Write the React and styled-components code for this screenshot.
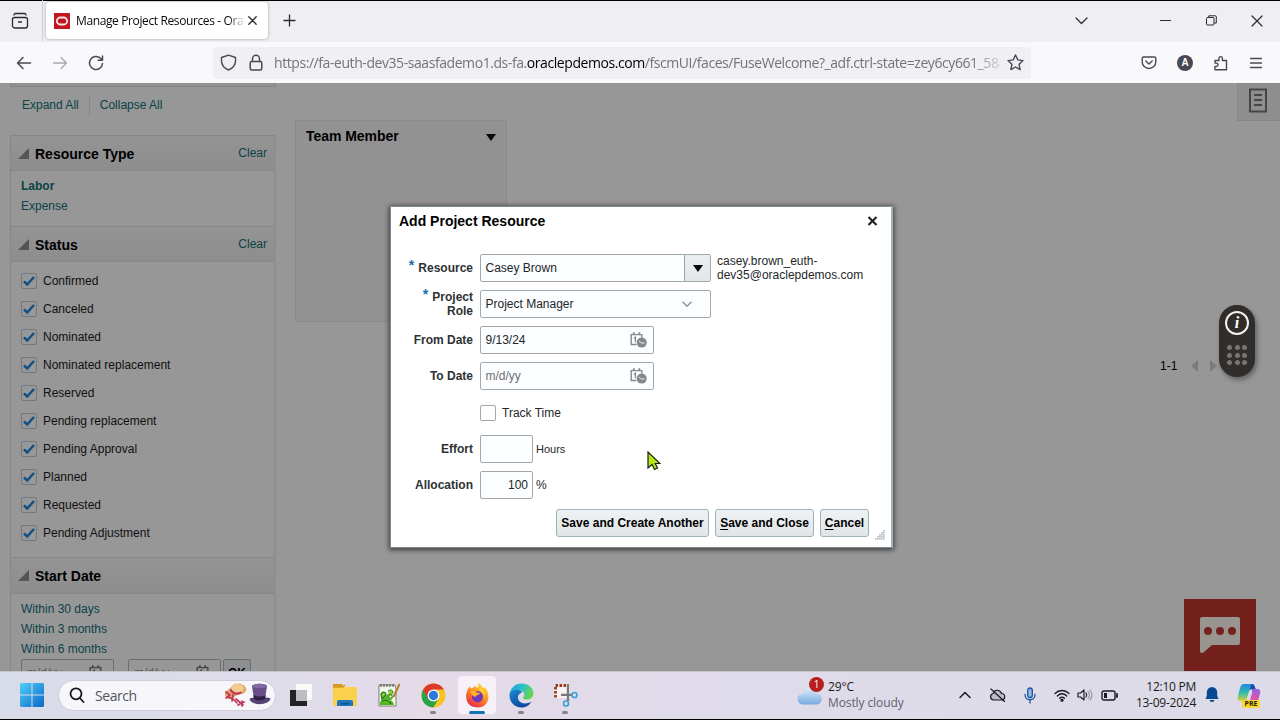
import React from "react";
import styled, { createGlobalStyle } from "styled-components";

const GlobalStyle = createGlobalStyle`
  * { box-sizing: border-box; }
  body { margin: 0; background: #000; font-family: "Liberation Sans", Arial, sans-serif; font-size: 12px; color: #000; }
  svg { display: block; flex: none; }
`;

const ui = `"Open Sans", "Noto Sans", sans-serif`;

const Screen = styled.div`
  width: 1280px; height: 720px; padding: 1px 0; overflow: hidden;
  display: flex; flex-direction: column; background: #000;
`;

/* Browser chrome */
const TabStrip = styled.div`
  height: 41px; flex: none; display: flex; align-items: center; background: #efeef3;
  color: #2b2a33; padding: 0 17px 2px 0;
`;
const TabManager = styled.div`
  width: 43px; height: 41px; padding-left: 11px; display: flex; align-items: center;
  border-right: 1px solid #cfced6;
`;
const Tab = styled.div`
  width: 222px; height: 37px; margin-left: 3px; padding: 0 10px 0 8px; border-radius: 4px;
  background: #fff; box-shadow: 0 0 3px rgba(0,0,0,.35);
  display: flex; align-items: center;
`;
const TabTitle = styled.span`
  width: 169px; margin-left: 6px; overflow: hidden; white-space: nowrap;
  font: 12px/20px ${ui}; letter-spacing: -0.38px; color: #08080c;
  mask-image: linear-gradient(90deg, #000 90%, transparent 100%);
`;
const PlusSlot = styled.div` margin-left: 15px; flex: 1; `;
const WindowButtons = styled.div` display: flex; align-items: center; `;
const WinSlot = styled.div` margin-left: ${p => p.$gap}px; `;

const NavBar = styled.div`
  height: 41px; flex: none; display: flex; align-items: center; background: #f9f9fb; color: #4a4953;
`;
const NavButtons = styled.div`
  width: 213px; display: flex; gap: 20px; padding-left: 16px;
`;
const UrlBar = styled.div`
  width: 818px; height: 32px; border-radius: 4px; background: #f0eff4; display: flex; align-items: center;
  padding: 0 7px;
`;
const UrlText = styled.div`
  width: 726px; margin: 1px 7px 0 11px; overflow: hidden; white-space: nowrap;
  font: 14px/22px ${ui}; letter-spacing: ${p => p.$track || 0}px; color: #74737b;
  mask-image: linear-gradient(90deg, #000 96%, transparent 101%);
  b { font-weight: 400; color: #000; }
`;
const NavActions = styled.div`
  flex: 1; display: flex; justify-content: flex-end; align-items: center; gap: 18px; padding-right: 17px;
`;
const Avatar = styled.span`
  width: 16px; height: 16px; margin: 0 2px; border-radius: 50%; background: #4a4953; color: #fff;
  display: flex; align-items: center; justify-content: center; font: bold 10px/16px "Liberation Sans", sans-serif;
`;

/* Page */
const Page = styled.main`
  position: relative; height: 588px; flex: none; overflow: hidden; background: #979797; display: flex;
`;
const Sidebar = styled.aside`
  width: 266px; margin-left: 10px; flex: none;
`;
const SidebarTop = styled.div`
  height: 4px; border: 1px solid #868686; border-top: 0; background: #919191;
`;
const TreeActions = styled.div`
  height: 48px; display: flex; align-items: center; padding: 0 0 12px 12px;
`;
const Link = styled.a`
  color: #0b4247; font-size: 12px; line-height: 20px; font-weight: ${p => (p.$bold ? 700 : 400)}; display: block;
`;
const Rule = styled.i` width: 1px; height: 21px; margin: 0 10px; background: #868686; `;
const Facets = styled.div` border: 1px solid #868686; border-right-width: 2px; border-right-color: #8e8e8e; height: 560px; `;
const FacetHead = styled.div`
  height: ${p => p.$h}px; padding: 0 7px; display: flex; align-items: center;
  background: linear-gradient(#949494, #8d8d8d); border-bottom: 1px solid #868686;
  border-top: ${p => (p.$first ? 0 : "1px solid #868686")};
  h2 { flex: 1; margin: 1px 0 0 6px; font-size: 14px; line-height: 18px; }
`;
const LinkList = styled.div`
  padding: ${p => p.$pad}px 10px 0 10px; height: ${p => p.$h || "auto"};
`;
const CheckList = styled.div` height: 295px; padding: 5px 10px 0; `;
const CheckRow = styled.div` height: 28px; display: flex; align-items: center; gap: 6px; color: #101010; `;
const Box = styled.span`
  width: 16px; height: 16px; border: 1px solid ${p => p.$line || "#747a7c"}; border-radius: 2px;
  display: flex; align-items: center; justify-content: center;
`;
const RangeRow = styled.div` display: flex; padding-left: 10px; `;
const DimInput = styled.div`
  width: ${p => p.$w}px; height: 28px; margin-right: ${p => p.$gap}px; padding: 0 7px 0 5px;
  display: flex; align-items: center; justify-content: space-between;
  border: 1px solid #686f71; border-radius: 2px; color: #555;
`;
const DimButton = styled.div`
  width: 28px; height: 28px; border: 1px solid #686f71; border-radius: 2px; background: #8e8f90;
  font-weight: 700; line-height: 26px; text-align: center;
`;

const Content = styled.section` flex: 1; display: flex; align-items: flex-start; padding-left: 19px; `;
const MemberCard = styled.div`
  width: 212px; height: 202px; margin-top: 37px; padding: 6px 10px; border: 1px solid #8b8b8b; border-radius: 2px;
  background: #929292; display: flex; justify-content: space-between; align-items: flex-start;
  h2 { margin: 0; font-size: 14px; line-height: 18px; letter-spacing: -0.05px; }
  svg { margin-top: 7px; }
`;
const Pager = styled.div`
  margin: 275px 0 0 653px; display: flex; align-items: center; line-height: 16px;
  span { width: 31px; }
  svg + svg { margin-left: 12px; }
`;
const DocTab = styled.div`
  width: 43px; height: 38px; margin-left: auto; padding: 5px 0 0 11px; background: #8e8e8e;
  border-left: 1px solid #898989; border-bottom: 1px solid #858585;
`;

/* Floating layers over the page */
const Pill = styled.div`
  position: absolute; left: 1219px; top: 222px; width: 36px; height: 72px; border-radius: 18px;
  background: #302d2a; box-shadow: 2px 3px 5px rgba(0,0,0,.35); display: flex; flex-direction: column; align-items: center;
  padding-top: 6px; gap: 10px;
`;
const InfoDot = styled.div`
  width: 24px; height: 24px; border: 2px solid #f4f2f0; border-radius: 50%; color: #fff;
  font: italic bold 16px/19px "Liberation Serif", serif; text-align: center;
`;
const DotGrid = styled.div`
  display: grid; grid-template-columns: repeat(3, 5px); gap: 2.5px;
  i { width: 5px; height: 5px; border-radius: 50%; background: #777573; }
`;
const ChatButton = styled.div`
  position: absolute; left: 1184px; top: 516px; width: 72px; height: 72px; background: #74211e;
  display: flex; align-items: center; justify-content: center;
`;
const Dialog = styled.div`
  position: absolute; left: 390px; top: 123px; width: 503px; height: 342px;
  background: #fff; border: 1px solid #7e8b92; border-right: 2px solid #a3b1bb; box-shadow: 0 1px 5px 1px rgba(0,0,0,.6);
  display: flex; flex-direction: column;
`;
const DialogHead = styled.header`
  height: 43px; padding: 5px 13px 0 8px; display: flex; justify-content: space-between; align-items: flex-start;
  h1 { margin: 0; font-size: 14px; line-height: 18px; }
  svg { margin-top: 4px; }
`;
const FormRow = styled.div`
  height: 36.15px; display: flex; align-items: center;
`;
const Label = styled.label`
  width: 82px; margin-right: 7px; text-align: right; font-weight: 700; line-height: 14px; color: #2e3234;
`;
const Star = styled.sup` color: #1a6fa8; font-size: 14px; line-height: 0; vertical-align: 2px; margin-right: 4px; `;
const Field = styled.div`
  width: ${p => p.$w}px; height: 28px; border: 1px solid #a0aaae; border-radius: 2px; background: #fcfdfe;
  display: flex; align-items: center; justify-content: ${p => (p.$right ? "flex-end" : "space-between")};
  padding: 0 ${p => (p.$pad ?? 4)}px 0 4.5px; color: ${p => (p.$hint ? "#6c7073" : "#22262a")};
`;
const DropButton = styled.span`
  width: 26px; height: 26px; background: linear-gradient(#eceff1, #e2e6e9); border-left: 1px solid #9aa4a8;
  display: flex; align-items: center; justify-content: center;
`;
const Note = styled.span`
  margin-left: ${p => p.$gap}px; line-height: 14px; font-size: ${p => p.$size || 12}px; color: #24282b;
`;
const Footer = styled.footer` display: flex; gap: 6px; padding: 6px 0 0 165px; `;
const Button = styled.button`
  width: ${p => p.$w}px; height: 28px; padding: 0; border: 1px solid #9fb0b8; border-radius: 3px;
  background: linear-gradient(#eef2f4, #e0e5e8); font: bold 12px "Liberation Sans", Arial, sans-serif; color: #000; white-space: nowrap;
  u { text-underline-offset: 2px; }
`;
const Grip = styled.div` position: absolute; right: 6px; bottom: 7px; `;
const Cursor = styled.div` position: absolute; left: 647px; top: 368px; `;

/* Taskbar */
const Taskbar = styled.div`
  height: 48px; flex: none; display: flex; align-items: center; padding: 0 0 1px 20px;
  background: linear-gradient(90deg, #d8dce8 0, #dfdcea 22%, #e5dae8 34%, #dfdbea 55%, #dddbe7 100%);
  border-top: 1px solid #c4c4cf; font-family: ${ui}; color: #1b1b20;
`;
const SearchPill = styled.div`
  width: 218px; height: 31px; margin: 0 3px 0 14px; border-radius: 16px; background: #f7f7fb; border: 1px solid #d0ced9;
  display: flex; align-items: center; padding: 0 3px 0 10px; color: #555560;
  font-size: 14px; letter-spacing: -0.45px;
  span { flex: 1; margin-left: 10px; }
`;
const Slot = styled.div`
  width: 38px; height: 38px; margin: 0 3px; border-radius: 4px; position: relative;
  display: flex; align-items: center; justify-content: center;
  background: ${p => (p.$active ? "#f6f1f8" : "transparent")};
  &::after {
    content: ""; position: absolute; bottom: 0; height: 3px; border-radius: 2px;
    width: ${p => (p.$active ? 16 : p.$open ? 6 : 0)}px; background: ${p => (p.$active ? "#1473b5" : "#85838c")};
  }
`;
const Weather = styled.div`
  margin-left: 209px; width: 130px; display: flex; gap: 4px; align-items: center; position: relative;
  font-size: 12px; line-height: 16px; white-space: nowrap; letter-spacing: ${p => p.$track}px;
  p { margin: 0; } p + p { color: #62616b; }
`;
const Badge = styled.span`
  position: absolute; left: 13px; top: -2px; width: 15px; height: 15px; border-radius: 50%; background: #b81e1e; color: #fff;
  font-size: 10px; line-height: 15px; text-align: center;
`;
const Tray = styled.div`
  flex: 1; display: flex; align-items: center; justify-content: flex-end; padding-right: 19px;
`;
const TraySlot = styled.div` margin-right: ${p => p.$gap}px; `;
const Clock = styled.div`
  width: 70px; margin-right: 9px; text-align: right; font-size: 12px; line-height: 16px; letter-spacing: -0.25px; white-space: nowrap;
`;
const Copilot = styled.div` position: relative; margin-left: 18px; `;
const PreTag = styled.span`
  position: absolute; left: 5px; bottom: -1px; width: 18px; height: 8px; border-radius: 2px; background: #fcd62e;
  color: #231d08; font-size: 7px; font-weight: 700; line-height: 8px; text-align: center;
`;

const Stroke = ({ w = 16, h = w, vb, sw = 1.3, children, ...rest }) => (
  <svg width={w} height={h} viewBox={vb || `0 0 ${w} ${h}`} fill="none" stroke="currentColor" strokeWidth={sw}
    strokeLinecap="round" strokeLinejoin="round" {...rest}>{children}</svg>
);
const TabClose = styled(Stroke)` margin-left: 3px; `;
const Lock = styled(Stroke)` margin-left: 12px; `;
const Faded = styled(Stroke)` opacity: .45; `;
const MenuLines = styled(Stroke)` margin-left: 2px; `;

const CalendarIcon = ({ color = "#85888a" }) => (
  <svg width="17" height="16" viewBox="0 0 17 16">
    <path d="M1.200 2.300v10.200h5.300M11.800 2.500v3M.5 2.600h12" fill="none" stroke={color} strokeWidth="1.4" />
    <path d="M3.800 .3v2.500M9.300 .3v2.500" fill="none" stroke={color} strokeWidth="1.800" />
    <path d="M3.800 6.200 5.400 5.200v5" fill="none" stroke={color} strokeWidth="1.300" />
    <circle cx="11.700" cy="10.600" r="5" fill={color} />
    <path d="M9 9.200l2.600 1.900 2.900-.2" fill="none" stroke="#f2f2f2" strokeWidth="1" />
  </svg>
);
const Disclosure = () => (
  <svg width="11" height="11"><path d="M11 0v11H0z" fill="#555" /></svg>
);
const Caret = () => (
  <svg width="10" height="7"><path d="M0 0h10L5 7z" fill="#080808" /></svg>
);

const WindowsIcon = () => (
  <svg width="24" height="24" viewBox="0 0 24 24">
    <defs><linearGradient id="win" x1="0" y1="0" x2="1" y2="1"><stop stopColor="#4fd0f8" /><stop offset="1" stopColor="#0b67c8" /></linearGradient></defs>
    <path d="M1 0h10.5v11.5H0V1zM12.5 0H23l1 1v10.5H12.5zM0 12.5h11.5V24H1l-1-1zM12.5 12.5H24V23l-1 1H12.5z" fill="url(#win)" />
  </svg>
);
const HatsIcon = () => (
  <svg width="48" height="24" viewBox="0 0 48 24">
    <path d="M1 12C0 7 6 7 8 3c3-4 12-3 14 2 1 4-2 6-6 6-4 1-5 3-8 5-4 1-6-1-7-4z" fill="#e3a965" />
    <path d="M7 7C8 0 17-1 20 5c-1 4-6 6-9 5z" fill="#f3cd8f" />
    <path d="M6.500 6.500c2 4 6 5 11 3" fill="none" stroke="#c1365c" strokeWidth="2.200" />
    <path d="M2 9l4 3-4 3M4 14l5 2 4 4M9 12l-1 6M12 16l7 6M18 18v5M14 22l6-3" fill="none" stroke="#c1365c" strokeWidth="1.700" strokeLinecap="round" />
    <path d="M25.500 15.500c4-2 17-2 21 0-1 7-20 8-21 0z" fill="#564277" />
    <path d="M28 3c3-3 13-3 15 0l-2 13c-2 3-8 3-11 0z" fill="#684f8b" />
    <ellipse cx="35.500" cy="3" rx="7.500" ry="2.200" fill="#8169a3" />
    <path d="M29.500 12c3 2 9 2 12 0l-.5 4c-3 2-8 2-11 0z" fill="#2c2144" />
  </svg>
);
const TaskViewIcon = () => (
  <svg width="24" height="24" viewBox="0 0 24 24">
    <path d="M1 7h6v11h11v5H1z" fill="#232326" /><path d="M7 1h16v16H7z" fill="#fafafa" /><path d="M7 7h11v11H7z" fill="#bdbcc0" />
  </svg>
);
const FolderIcon = () => (
  <svg width="26" height="24" viewBox="0 0 26 24">
    <path d="M1 1h9l2 3h12v4H1z" fill="#d99a1c" /><rect x="1" y="4" width="24" height="19" rx="1.5" fill="#fbd04d" />
    <path d="M1 4h10l2-2" fill="none" stroke="#d99a1c" strokeWidth="1.500" />
    <path d="M5 23v-4q0-2 2-2h12q2 0 2 2v4z" fill="#1c76bd" /><path d="M9 20h8v1.5H9z" fill="#0c4f87" />
  </svg>
);
const NotepadIcon = () => (
  <svg width="24" height="24" viewBox="0 0 24 24">
    <path d="M2 2h16l1 4v17H2z" fill="#f5f8ee" stroke="#60645a" strokeWidth=".8" />
    <path d="M4 1v3M7 1v3M10 1v3M13 1v3M16 1v3" stroke="#444" strokeWidth="1" />
    <path d="M3 22c-1-5 4-6 7-10 3-3 6-1 6 2s-3 3-4 3c3 0 5 3 5 5z" fill="#52b41f" />
    <path d="M4 11c2-3 5-2 5 1l-4 4zM5 18c3-1 6-1 9 3" fill="#87d13d" stroke="#1c6f12" strokeWidth="1.200" />
    <path d="M11 8c2-2 5-1 5 1s-2 3-4 3" fill="#87d13d" stroke="#1c6f12" strokeWidth=".8" />
    <circle cx="13.500" cy="13.500" r="1.400" fill="#fff" stroke="#276b18" strokeWidth=".6" />
    <path d="M22.500 1 16.500 14" stroke="#b97d2c" strokeWidth="2" />
  </svg>
);
const ChromeIcon = () => (
  <svg width="25" height="25" viewBox="0 0 24 24">
    <circle cx="12" cy="12" r="11.5" fill="#f7c325" />
    <path d="M2 6.3a11.5 11.5 0 0 1 20 0H12L7 14.8z" fill="#dc3a2d" />
    <path d="M2 6.3A11.5 11.5 0 0 0 11.8 23.5L17 14.8 12 12H5.400z" fill="#2ba24c" />
    <path d="M2 6.3 7 14.9 12 6.3 10 3z" fill="#dc3a2d" />
    <circle cx="12" cy="12" r="5.7" fill="#fff" /><circle cx="12" cy="12" r="4.5" fill="#2b78df" />
  </svg>
);
const FirefoxIcon = () => (
  <svg width="25" height="25" viewBox="0 0 24 24">
    <defs><linearGradient id="fx" x1=".8" y1="0" x2=".2" y2="1"><stop stopColor="#ffe53d" /><stop offset=".45" stopColor="#ff8f1f" /><stop offset="1" stopColor="#e7204f" /></linearGradient></defs>
    <path d="M3 5.5 4.6 3l1 2.200L8 4.400C10 1.500 11 4.500 12 4.800c1-1.400 1-3.300.8-4.800 3 1.500 3.700 3.800 5 5.300l.7-1.700C25 9.600 24 23.500 12 23.500S-.5 11.500 3 5.500z" fill="url(#fx)" />
    <circle cx="12" cy="13.300" r="5.300" fill="#6f37b9" />
    <path d="M5.300 8c2.400-1.200 4.700-.1 6 1.400 1.600 0 3 .4 3 1-1 1.200-3.600 1-3.900 3-1.800 0-4.400-1.600-5.100-5.400z" fill="#ffb32d" />
    <path d="M14 7c3 1.300 4.700 4 3.700 7.800C20 10 17.800 6 14 4.400z" fill="#ffda38" />
  </svg>
);
const EdgeIcon = () => (
  <svg width="25" height="25" viewBox="0 0 24 24">
    <defs>
      <linearGradient id="edA" x1="0" y1="0" x2="1" y2=".4"><stop stopColor="#2499dc" /><stop offset=".5" stopColor="#29bfd0" /><stop offset="1" stopColor="#65d452" /></linearGradient>
      <linearGradient id="edB" x1="0" y1="0" x2=".5" y2="1"><stop stopColor="#1b87d5" /><stop offset="1" stopColor="#0d4a9e" /></linearGradient>
    </defs>
    <path d="M.6 11C1 5 6 .5 12 .5c7 0 11.500 4.700 11.500 9.400 0 4-3 6-6 6-3.800 0-4.800-1.300-3.300-3 1.200-1.800.6-5.300-4.200-5.400C6.800 7.500 2 7.500.6 11z" fill="url(#edA)" />
    <path d="M.5 12C.6 8 4 6.300 8 6.500c2.500.2 4 1.500 4.500 2.500-3 1-4.500 3.500-3.700 6.300C10 19.500 15.500 21 21.500 18 19 22 15.500 23.500 12 23.500 5.500 23.500.5 18.500.5 12z" fill="url(#edB)" />
  </svg>
);
const SnipIcon = () => (
  <svg width="26" height="26" viewBox="0 0 26 26">
    <path d="M2 2h16v14H2z" fill="#f5f2f1" />
    <path d="M3.500 15.500V3.500h11" fill="none" stroke="#9c3a20" strokeWidth="2.800" strokeDasharray="2.600 1.400" />
    <path d="M16 2v17M9 12.800h11" stroke="#77777c" strokeWidth="2.300" />
    <circle cx="14" cy="21.500" r="2.500" fill="none" stroke="#3fa3d9" strokeWidth="1.700" />
    <circle cx="22.500" cy="13" r="2.500" fill="none" stroke="#3fa3d9" strokeWidth="1.700" />
  </svg>
);
const CloudIcon = () => (
  <svg width="28" height="22" viewBox="0 0 28 22">
    <defs><linearGradient id="cl" x1="0" y1="0" x2="0" y2="1"><stop stopColor="#dcebfb" /><stop offset="1" stopColor="#78a9e0" /></linearGradient></defs>
    <path d="M7 20.500a5.500 5.500 0 0 1 0-11C8 3 18 2 20 9c8 0 7 11.500 1 11.500z" fill="url(#cl)" />
  </svg>
);
const CopilotIcon = () => (
  <svg width="24" height="24" viewBox="0 0 24 24">
    <defs>
      <linearGradient id="cpA" x1="0" y1="0" x2="0" y2="1"><stop stopColor="#2388df" /><stop offset=".5" stopColor="#2eb9b0" /><stop offset="1" stopColor="#d9d33a" /></linearGradient>
      <linearGradient id="cpB" x1="0" y1="0" x2="0" y2="1"><stop stopColor="#8f65e8" /><stop offset=".6" stopColor="#dd54a9" /><stop offset="1" stopColor="#ef7d52" /></linearGradient>
    </defs>
    <path d="M7 1h8q2 0 2.600 2l1 3h-4q-2 0-2.700 2.500L10 15q-1 3-4 3H3q-3 0-2.300-4L3 5q1-4 4-4z" fill="url(#cpA)" />
    <path d="M14.500 1q2.500 0 3 2l1 3h-4l-2 1z" fill="#1b4bb0" />
    <path d="M14.500 6H20q4 0 3.200 4L21 18q-1 4-4 4H9q3-1 3.800-4l2-7q.7-2.500-.3-5z" fill="url(#cpB)" />
  </svg>
);

const statuses = ["Confirmed", "Canceled", "Nominated", "Nominated replacement", "Reserved", "Pending replacement",
  "Pending Approval", "Planned", "Requested", "Pending Adjustment"];

function BrowserChrome() {
  return (
    <>
      <TabStrip>
        <TabManager>
          <Stroke w={18} sw={1.3}><rect x="1.500" y="5.500" width="15" height="10.500" rx="2" /><path d="M3 3q0-1.500 1.500-1.500h9q1.500 0 1.500 1.500M7.500 10h3" /></Stroke>
        </TabManager>
        <Tab>
          <svg width="16" height="16"><rect width="16" height="16" fill="#c01722" /><rect x="2.800" y="4.500" width="10.400" height="7" rx="3.500" fill="none" stroke="#ffe5e5" strokeWidth="1.800" /></svg>
          <TabTitle>Manage Project Resources - Oracle</TabTitle>
          <TabClose w={9} sw={1.3}><path d="M.8.8l7.400 7.400M8.200.8.8 8.200" /></TabClose>
        </Tab>
        <PlusSlot><Stroke w={13} sw={1.300}><path d="M6.500 1v11M1 6.500h11" /></Stroke></PlusSlot>
        <WindowButtons>
          <Stroke w={13} h={8} sw={1.200}><path d="M1 1l5.500 5.500L12 1" /></Stroke>
          <WinSlot $gap={72}><Stroke w={11} h={3} sw={1}><path d="M.5 1.500h10" /></Stroke></WinSlot>
          <WinSlot $gap={35}><Stroke w={11} sw={1}><rect x=".5" y="2.500" width="7.500" height="7.500" rx="1" /><path d="M2.800 2V.8h6.500q1 0 1 1V8H8.500" /></Stroke></WinSlot>
          <WinSlot $gap={34}><Stroke w={12} sw={1.200}><path d="M1 1l10 10M11 1 1 11" /></Stroke></WinSlot>
        </WindowButtons>
      </TabStrip>
      <NavBar>
        <NavButtons>
          <Stroke w={16} sw={1.500}><path d="M14.500 8H1.500M7 2.500 1.500 8 7 13.500" /></Stroke>
          <Faded w={16} sw={1.300}><path d="M1.500 8h13M9 2.500 14.500 8 9 13.500" /></Faded>
          <Stroke w={16} sw={1.500}><path d="M14.500 8.500A6.500 6.500 0 1 1 12.500 3.300L14 4.800M14.500 1v4.300h-4.300" /></Stroke>
        </NavButtons>
        <UrlBar>
          <Stroke w={17} sw={1.400}><path d="M8.500 1.200 15.500 3.500v3.200c0 4.300-2.500 7.300-7 9.300-4.500-2-7-5-7-9.300V3.500z" /></Stroke>
          <Lock w={14} h={17} sw={1.500}><rect x="1.200" y="7.500" width="11.600" height="8.500" rx="1.500" /><path d="M3.500 7.500V4.700a3.500 3.500 0 0 1 7 0v2.800" /></Lock>
          <UrlText $track={-0.43}>https://fa-euth-dev35-saasfademo1.ds-fa.<b>oraclepdemos.com</b>/fscmUI/faces/FuseWelcome?_adf.ctrl-state=zey6cy661_58&amp;</UrlText>
          <Stroke w={17} sw={1.400}><path d="M8.500 1l2.300 4.900 5.200.7-3.900 3.700 1 5.300-4.600-2.600-4.600 2.600 1-5.300L1 6.600l5.200-.7z" /></Stroke>
        </UrlBar>
        <NavActions>
          <Stroke w={16} sw={1.400}><path d="M2.500 2h11q1.300 0 1.300 1.300V7a6.800 6.500 0 0 1-13.600 0V3.300Q1.200 2 2.500 2zM4.800 6 8 9l3.200-3" /></Stroke>
          <Avatar>A</Avatar>
          <Stroke w={16} sw={1.400}><path d="M2 14.800v-3.300h1.300a1.700 1.700 0 0 0 0-3.400H2V5.500h4V3.300a1.700 1.700 0 0 1 3.400 0v2.200h4.100v9.300z" /></Stroke>
          <MenuLines w={14} h={12} sw={1.300}><path d="M1.500 1.500h11M1.500 6h11M1.500 10.500h11" /></MenuLines>
        </NavActions>
      </NavBar>
    </>
  );
}

function FilterSidebar() {
  return (
    <Sidebar>
      <SidebarTop />
      <TreeActions><Link>Expand All</Link><Rule /><Link>Collapse All</Link></TreeActions>
      <Facets>
        <FacetHead $first $h={35}><Disclosure /><h2>Resource Type</h2><Link>Clear</Link></FacetHead>
        <LinkList $pad={5} $h="55px"><Link $bold>Labor</Link><Link>Expense</Link></LinkList>
        <FacetHead $h={36}><Disclosure /><h2>Status</h2><Link>Clear</Link></FacetHead>
        <CheckList>
          {statuses.map(s => (
            <CheckRow key={s}>
              <Box><svg width="14" height="12" viewBox="0 0 14 12"><path d="M2 6.300 5.200 9.500 12 2" fill="none" stroke="#134f82" strokeWidth="2.500" /></svg></Box>
              {s}
            </CheckRow>
          ))}
        </CheckList>
        <FacetHead $h={37}><Disclosure /><h2>Start Date</h2></FacetHead>
        <LinkList $pad={5}><Link>Within 30 days</Link><Link>Within 3 months</Link><Link>Within 6 months</Link></LinkList>
        <RangeRow>
          <DimInput $w={93} $gap={14}>m/d/yy<CalendarIcon color="#444" /></DimInput>
          <DimInput $w={93} $gap={2}>m/d/yy<CalendarIcon color="#444" /></DimInput>
          <DimButton>OK</DimButton>
        </RangeRow>
      </Facets>
    </Sidebar>
  );
}

function ResourceDialog() {
  return (
    <Dialog>
      <DialogHead>
        <h1>Add Project Resource</h1>
        <svg width="11" height="10" viewBox="0 0 11 10"><path d="M1.500 1l8 8M9.500 1l-8 8" stroke="#222" strokeWidth="2.200" /></svg>
      </DialogHead>
      <FormRow>
        <Label><Star>*</Star>Resource</Label>
        <Field $w={231} $pad={0}>Casey Brown<DropButton><Caret /></DropButton></Field>
        <Note $gap={6}>casey.brown_euth-<br />dev35@oraclepdemos.com</Note>
      </FormRow>
      <FormRow>
        <Label><Star>*</Star>Project<br />Role</Label>
        <Field $w={231} $pad={18}>Project Manager<Stroke w={10} h={7} sw={1.500} color="#909598"><path d="M1 1.200l4 4 4-4" /></Stroke></Field>
      </FormRow>
      <FormRow><Label>From Date</Label><Field $w={174} $pad={6}>9/13/24<CalendarIcon /></Field></FormRow>
      <FormRow><Label>To Date</Label><Field $w={174} $pad={6} $hint>m/d/yy<CalendarIcon /></Field></FormRow>
      <FormRow><Label /><Box $line="#a0aaae" /><Note $gap={6}>Track Time</Note></FormRow>
      <FormRow><Label>Effort</Label><Field $w={53} /><Note $gap={3} $size={11}>Hours</Note></FormRow>
      <FormRow><Label>Allocation</Label><Field $w={53} $right>100</Field><Note $gap={3}>%</Note></FormRow>
      <Footer>
        <Button $w={153}>Save and Create Another</Button>
        <Button $w={99}><u>S</u>ave and Close</Button>
        <Button $w={49}><u>C</u>ancel</Button>
      </Footer>
      <Grip>
        <svg width="10" height="10" fill="#c3c5c7">
          {[[8, 0], [6, 2], [8, 2], [4, 4], [6, 4], [8, 4], [2, 6], [4, 6], [6, 6], [8, 6], [0, 8], [2, 8], [4, 8], [6, 8], [8, 8]].map(([x, y]) => (
            <rect key={`${x}-${y}`} x={x} y={y} width="1.700" height="1.700" />
          ))}
        </svg>
      </Grip>
    </Dialog>
  );
}

function WindowsTaskbar() {
  return (
    <Taskbar>
      <WindowsIcon />
      <SearchPill>
        <Stroke w={16} sw={1.800} color="#17171b"><circle cx="7" cy="6.800" r="5.500" /><path d="M10.800 11 14.500 15" /></Stroke>
        <span>Search</span><HatsIcon />
      </SearchPill>
      <Slot><TaskViewIcon /></Slot>
      <Slot><FolderIcon /></Slot>
      <Slot><NotepadIcon /></Slot>
      <Slot $open><ChromeIcon /></Slot>
      <Slot $active><FirefoxIcon /></Slot>
      <Slot $open><EdgeIcon /></Slot>
      <Slot $open><SnipIcon /></Slot>
      <Weather $track={-0.1}>
        <CloudIcon /><Badge>1</Badge>
        <div><p>29°C</p><p>Mostly cloudy</p></div>
      </Weather>
      <Tray>
        <TraySlot $gap={18}><Stroke w={12} h={8} sw={1.500}><path d="M1 6.500 6 1.500l5 5" /></Stroke></TraySlot>
        <TraySlot $gap={18}><Stroke w={17} h={14} sw={1.200}><path d="M4.500 12a3.300 3.300 0 0 1-.3-6.500C5 1.500 11 .8 12.500 5.500c4.500.3 4 6.500 0 6.500z" fill="#bdbcc5" /><path d="M2 1l13.500 12.500" /></Stroke></TraySlot>
        <TraySlot $gap={18}><Stroke w={12} h={17} sw={1.300} color="#17549c"><rect x="3.700" y="1" width="4.600" height="9.500" rx="2.300" fill="#9ab7dd" /><path d="M1 7.500c0 7 10 7 10 0M6 13v3" /></Stroke></TraySlot>
        <TraySlot $gap={7}><Stroke w={16} h={13} sw={1.300}><path d="M1 4.500c4-4 10-4 14 0M3.300 7c3-3 6.500-3 9.400 0M5.600 9.300c1.500-1.500 3.300-1.500 4.800 0" /><circle cx="8" cy="11.200" r="1" fill="currentColor" /></Stroke></TraySlot>
        <TraySlot $gap={8}><Stroke w={16} h={14} sw={1.200}><path d="M1 5h2.500L7 2v10L3.500 9H1zM9 5q1.500 2 0 4" /><path d="M11 3.500q3 3.500 0 7M13 2q4 5 0 10" opacity=".35" /></Stroke></TraySlot>
        <TraySlot $gap={8}><Stroke w={17} h={11} sw={1.400}><rect x="1" y="1" width="13" height="9" rx="2" /><path d="M16 4v3" strokeWidth="1.800" /><rect x="3" y="3" width="3" height="5" fill="currentColor" stroke="none" /></Stroke></TraySlot>
        <Clock>12:10 PM<br />13-09-2024</Clock>
        <svg width="14" height="16" viewBox="0 0 14 16" fill="#074a91"><path d="M7 0a5.200 5.200 0 0 1 5.200 5.200V9L13.500 12H.5L1.800 9V5.200A5.200 5.200 0 0 1 7 0zM4.500 13h5q-.5 2-2.500 2t-2.500-2z" /></svg>
        <Copilot><CopilotIcon /><PreTag>PRE</PreTag></Copilot>
      </Tray>
    </Taskbar>
  );
}

export default function App() {
  return (
    <Screen>
      <GlobalStyle />
      <BrowserChrome />
      <Page>
        <FilterSidebar />
        <Content>
          <MemberCard><h2>Team Member</h2><Caret /></MemberCard>
          <Pager>
            <span>1-1</span>
            <svg width="7" height="12"><path d="M7 0v12L0 6z" fill="#7b7b7b" /></svg>
            <svg width="7" height="12"><path d="M0 0v12l7-6z" fill="#7b7b7b" /></svg>
          </Pager>
          <DocTab>
            <svg width="18" height="25" fill="none" stroke="#464646" strokeWidth="2"><path d="M1 1.500h16v22H1zM5 7h8M5 12h8M5 17h8" /></svg>
          </DocTab>
        </Content>
        <Pill>
          <InfoDot>i</InfoDot>
          <DotGrid>{Array.from({ length: 9 }, (_, i) => <i key={i} />)}</DotGrid>
        </Pill>
        <ChatButton>
          <svg width="40" height="36" viewBox="0 0 40 36">
            <path d="M2 0h36q2 0 2 2v24q0 2-2 2H12L4 35q-1 1-2.500 1Q0 36 0 34V2Q0 0 2 0z" fill="#989490" />
            <circle cx="8" cy="14" r="4" fill="#74211e" /><circle cx="20" cy="14" r="4" fill="#74211e" /><circle cx="32" cy="14" r="4" fill="#74211e" />
          </svg>
        </ChatButton>
        <ResourceDialog />
        <Cursor>
          <svg width="14" height="20" viewBox="0 0 14 20"><path d="M1 1v16l4-3.500 2.500 5 3-1.500-2.300-4.500H13z" fill="#b5e61d" stroke="#16200a" strokeWidth="1.200" /></svg>
        </Cursor>
      </Page>
      <WindowsTaskbar />
    </Screen>
  );
}
